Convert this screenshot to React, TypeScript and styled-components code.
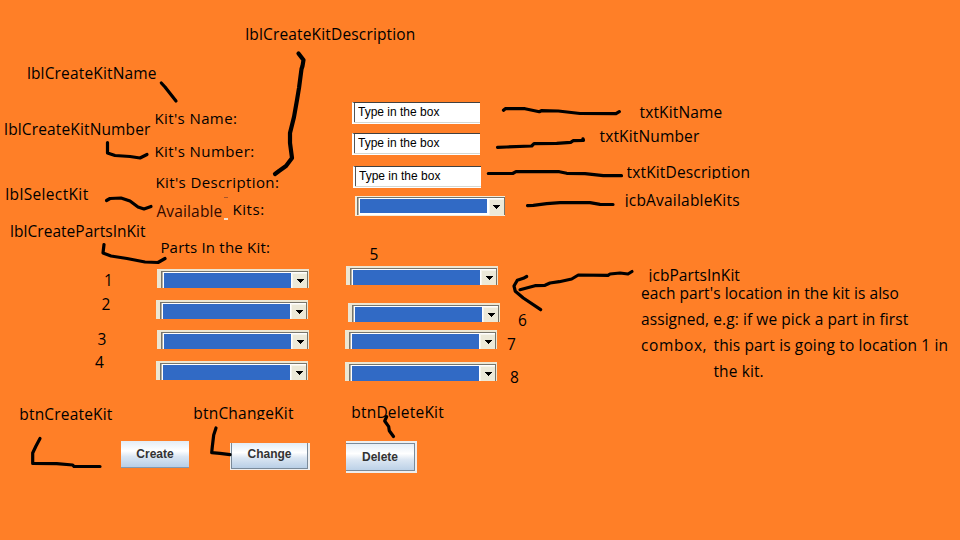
import React from 'react';
import styled, { createGlobalStyle, css } from 'styled-components';

const GlobalStyle = createGlobalStyle`
  * { box-sizing: border-box; }
  body { margin: 0; }
`;

const Page = styled.main`
  position: relative;
  width: 960px;
  height: 540px;
  overflow: hidden;
  background: #ff7f27;
  color: #000;
  font-family: 'Open Sans', 'Noto Sans', sans-serif;
`;

const Form = styled.form`
  display: flex;
  flex-direction: column;
  padding-top: 102px;
`;

const Row = styled.div<{ $height: number }>`
  display: flex;
  align-items: flex-start;
  height: ${(p) => p.$height}px;
`;

const LabelCell = styled.div<{ $indent: number; $drop: number; $width: number }>`
  display: flex;
  width: ${(p) => p.$width}px;
  padding: ${(p) => p.$drop}px 0 0 ${(p) => p.$indent}px;
`;

const FieldLabel = styled.label<{ $spacing: number }>`
  font-size: 15px;
  line-height: 20px;
  white-space: pre;
  letter-spacing: ${(p) => p.$spacing}px;
`;

const AvailableLabel = styled(FieldLabel)`
  position: relative;
  width: 76px;
  font-size: 15.5px;
  color: #330a00;

  &::before,
  &::after {
    content: '';
    position: absolute;
    left: 68px;
    width: 4px;
    height: 1px;
    background: #a8552a;
  }
  &::before { top: -4px; }
  &::after {
    top: 17px;
    height: 2px;
    background: #f6e3d2;
  }
`;

const KitsLabel = styled(FieldLabel)`
  margin-top: -2px;
`;

const TextField = styled.input`
  width: 128px;
  height: 22px;
  padding: 0 0 2px 4px;
  border: solid;
  border-width: 1px 0 1px 2px;
  border-color: #404040 #fff #fff #fff;
  border-radius: 0;
  outline: 0;
  background: linear-gradient(90deg, #555 0 1px, #fff 1px);
  box-shadow: inset 0 -1px #d5d8d2;
  color: #000;
  font: 12px/18px 'Liberation Sans', Arial, sans-serif;
`;

const ComboFrame = styled.div<{ $compact?: boolean; $shift?: number; $gap?: number }>`
  display: flex;
  flex: none;
  width: 152px;
  height: 19px;
  margin: ${(p) => p.$gap ?? 0}px 0 0 ${(p) => p.$shift ?? 0}px;
  padding: 2px 1px 0 4px;
  background: #ece6d3;
  ${(p) =>
    p.$compact &&
    css`
      width: 150px;
      height: 20px;
      padding: 1px 0 1px 2px;
      background: #f3ecdc;
    `}
`;

const ComboBody = styled.div`
  display: flex;
  flex: 1;
  border: solid #77756b;
  border-width: 1px 1px 0 1px;
  background: #fff;
  box-shadow: inset 1px 0 #b5b1a3;
`;

const ComboValue = styled.div<{ $compact?: boolean }>`
  flex: 1;
  margin: ${(p) => (p.$compact ? '1px 2px 2px 2px' : '1px 1px 0 2px')};
  background: #316ac5;
`;

const ComboButton = styled.span<{ $compact?: boolean }>`
  display: flex;
  justify-content: center;
  width: 15px;
  margin-top: 1px;
  padding: 6px 0 0 ${(p) => (p.$compact ? 0 : 1)}px;
  background: #ece9d8;
  box-shadow: inset 1px 1px #f7f5ec;
`;

const Combo = ({ compact, shift, gap }: { compact?: boolean; shift?: number; gap?: number }) => (
  <ComboFrame $compact={compact} $shift={shift} $gap={gap} role="combobox">
    <ComboBody>
      <ComboValue $compact={compact} />
      <ComboButton $compact={compact}>
        <svg width="7" height="4" viewBox="0 0 7 4" shapeRendering="crispEdges">
          <path d="M0 0H7V1H6V2H5V3H4V4H3V3H2V2H1V1H0Z" />
        </svg>
      </ComboButton>
    </ComboBody>
  </ComboFrame>
);

const PartColumns = styled.section`
  display: flex;
  height: 175px;
`;

const PartColumn = styled.div<{ $width: number; $indent: number }>`
  display: flex;
  flex-direction: column;
  width: ${(p) => p.$width}px;
  padding-left: ${(p) => p.$indent}px;
`;

const Actions = styled.footer`
  display: flex;
  align-items: flex-start;
  padding-left: 121px;
`;

const ActionButton = styled.button`
  width: 68px;
  height: 27px;
  padding: 0 0 1px;
  border: 0;
  border-bottom: 1px solid #8199b0;
  border-radius: 0;
  background: linear-gradient(#e3ecf5 0%, #fff 38%, #dbe6f2 60%, #b9cfe6 100%);
  color: #333;
  font: bold 12px/14px 'Liberation Sans', Arial, sans-serif;
`;

const ChangeButton = styled(ActionButton)`
  width: 77px;
  height: 26px;
  margin: 2px 0 0 42px;
  padding: 0 0 3px;
  border: solid #7a8a99;
  border-width: 0 1px 1px 1px;
  box-shadow: -1px 0 #eee, 1px 0 #eee, 2px 0 #eee, 0 1px #eee, -1px 1px #eee, 2px 1px #eee;
`;

const DeleteButton = styled(ActionButton)`
  width: 71px;
  height: 32px;
  margin-left: 38px;
  padding: 2px 1px 2px 0;
  border: solid #eee;
  border-width: 2px 2px 2px 0;
  box-shadow: inset -1px 0 #7a8a99, inset 0 1px #7a8a99, inset 0 -1px #7a8a99;
`;

/* Notes laid freely over the form */
const Note = styled.span<{ $x: number; $base: number; $spacing?: number; $clip?: boolean }>`
  position: absolute;
  left: ${(p) => p.$x + 0.5}px;
  top: ${(p) => p.$base - 16}px;
  height: ${(p) => (p.$clip ? 17 : 21)}px;
  overflow: ${(p) => (p.$clip ? 'hidden' : 'visible')};
  font-size: 15.5px;
  line-height: 20px;
  white-space: pre;
  letter-spacing: ${(p) => p.$spacing ?? 0.2}px;
`;

const Explanation = styled.p`
  position: absolute;
  left: 641px;
  top: 280px;
  margin: 0;
  font-size: 15.5px;
  line-height: 26px;
  white-space: pre;
`;

const Line = styled.span<{ $indent?: number; $spacing: number }>`
  display: block;
  padding-left: ${(p) => p.$indent ?? 0}px;
  letter-spacing: ${(p) => p.$spacing}px;
`;

const Lead = styled.span`
  display: inline-block;
  width: 72.5px;
  letter-spacing: 0.6px;
`;

const Ink = styled.svg`
  position: absolute;
  inset: 0;
  pointer-events: none;
  fill: none;
  stroke: #000;
  stroke-width: 3.2;
  stroke-linecap: round;
  stroke-linejoin: round;
`;

const Stroke = styled.polyline<{ $bold?: boolean }>`
  stroke-width: ${(p) => (p.$bold ? 4.2 : 3.2)};
`;

type NoteData = [text: string, x: number, base: number, spacing?: number, clip?: boolean];

const notes: NoteData[] = [
  ['lblCreateKitDescription', 244.7, 40, 0.16],
  ['lblCreateKitName', 26.4, 79, 0.16],
  ['lblCreateKitNumber', 3.6, 135, 0.14],
  ['lblSelectKit', 4.8, 200, 0.35],
  ['lblCreatePartsInKit', 9.6, 237, 0.03],
  ['txtKitName', 639, 118, 0.15],
  ['txtKitNumber', 599, 142, 0.15],
  ['txtKitDescription', 626, 178, 0.16, true],
  ['jcbAvailableKits', 624.2, 206, 0.2, true],
  ['jcbPartsInKit', 648, 281, 0.05, true],
  ['btnCreateKit', 18.8, 420, 0.18],
  ['btnChangeKit', 192.8, 419, 0.2, true],
  ['btnDeleteKit', 350.8, 418, 0.2],
  ['1', 103.5, 286],
  ['2', 101, 310],
  ['3', 97, 345],
  ['4', 94.5, 368],
  ['5', 369, 260],
  ['6', 517.5, 326],
  ['7', 506.5, 350],
  ['8', 509.5, 383],
];

const strokes: { points: string; bold?: boolean }[] = [
  { points: '161.3,83 165,87 176,101' },
  {
    points:
      '298.5,53.5 303.5,60 302.5,66 301.5,69 299,88 297,100 294,117 290,133 290,143 292,158 286,166 279,171 275,174',
    bold: true,
  },
  { points: '107.5,142.5 107.5,153 115,155.5 130,156.5 140,158 147,154.5' },
  { points: '106.5,200.5 110,198.5 121,198 130,201 138,207 144,209 151,206.5' },
  { points: '104,244.5 103,253 111,256 127,258.5 145,262 158,262.5 165,258.5' },
  { points: '40,438.5 36,446 32.7,453 32.7,463.5 56.7,463.7 72.7,465 74,466.5 100,466.5' },
  { points: '216,428 213.7,435 212.3,446.7 211.7,452.7 220,453.3 230,454.7' },
  { points: '386.7,416.7 384.7,421 388.7,426.7 389.3,430.7 393.5,436.5' },
  {
    points:
      '503.5,110.3 505.3,108.7 525,108.7 539.3,111.7 541.3,110.7 558.3,111 580,113.5 616,113.7 619.3,111.7',
  },
  {
    points:
      '497.5,147.3 506.7,147 531.7,146 534,143.7 556.7,143.3 570.7,142.3 573.3,140.7 583.5,140.3 583,138.8',
  },
  { points: '488.3,173.5 512.7,173.5 516,171.7 559.3,171.7 566.7,173.3 585,173.7 603.3,175.7 621.5,175.7' },
  { points: '527.5,205.7 533.3,205.3 546.7,203.7 560,202.7 590,202.7 600,204.3 613,204.5' },
  {
    points:
      '632,271.5 628,274 620,273 610,274 608,275.3 578.3,275 571.7,279 559.3,281.7 550,283 545,285.3 535,285.7 520,289.7',
  },
  { points: '526.7,276.5 523.3,278.3 517.3,280.3 514,286 515.3,291.3 523.3,298 540.7,309.7' },
];

export default function App() {
  return (
    <Page>
      <GlobalStyle />
      <Form>
        <Row $height={31}>
          <LabelCell $indent={154.4} $drop={6} $width={352}>
            <FieldLabel $spacing={0.4}>Kit's Name:</FieldLabel>
          </LabelCell>
          <TextField defaultValue="Type in the box" />
        </Row>
        <Row $height={33}>
          <LabelCell $indent={154.4} $drop={8} $width={352}>
            <FieldLabel $spacing={0.42}>Kit's Number:</FieldLabel>
          </LabelCell>
          <TextField defaultValue="Type in the box" />
        </Row>
        <Row $height={30}>
          <LabelCell $indent={155.4} $drop={6} $width={353}>
            <FieldLabel $spacing={0.4}>Kit's Description:</FieldLabel>
          </LabelCell>
          <TextField defaultValue="Type in the box" />
        </Row>
        <Row $height={35}>
          <LabelCell $indent={156.4} $drop={5} $width={355}>
            <AvailableLabel $spacing={0.15}>Available</AvailableLabel>
            <KitsLabel $spacing={0.6}>Kits:</KitsLabel>
          </LabelCell>
          <Combo compact />
        </Row>
        <Row $height={35}>
          <LabelCell $indent={160.4} $drop={6} $width={352}>
            <FieldLabel $spacing={0.2}>Parts In the Kit:</FieldLabel>
          </LabelCell>
        </Row>
        <PartColumns>
          <PartColumn $width={345} $indent={156}>
            <Combo gap={3} shift={1} />
            <Combo gap={12} />
            <Combo gap={11} shift={1} />
            <Combo gap={12} />
          </PartColumn>
          <PartColumn $width={160} $indent={0}>
            <Combo shift={1} />
            <Combo gap={18} shift={3} />
            <Combo gap={8} />
            <Combo gap={13} />
          </PartColumn>
        </PartColumns>
        <Actions>
          <ActionButton type="button">Create</ActionButton>
          <ChangeButton type="button">Change</ChangeButton>
          <DeleteButton type="button">Delete</DeleteButton>
        </Actions>
      </Form>

      {notes.map(([text, x, base, spacing, clip]) => (
        <Note key={text} $x={x} $base={base} $spacing={spacing} $clip={clip}>
          {text}
        </Note>
      ))}
      <Explanation>
        <Line $spacing={0.05}>each part's location in the kit is also</Line>
        <Line $spacing={0.08}>assigned, e.g: if we pick a part in first</Line>
        <Line $spacing={0.13}>
          <Lead>combox,</Lead>this part is going to location 1 in
        </Line>
        <Line $indent={72.5} $spacing={0.1}>the kit.</Line>
      </Explanation>
      <Ink width="960" height="540" viewBox="0 0 960 540">
        {strokes.map(({ points, bold }) => (
          <Stroke key={points} points={points} $bold={bold} />
        ))}
      </Ink>
    </Page>
  );
}
